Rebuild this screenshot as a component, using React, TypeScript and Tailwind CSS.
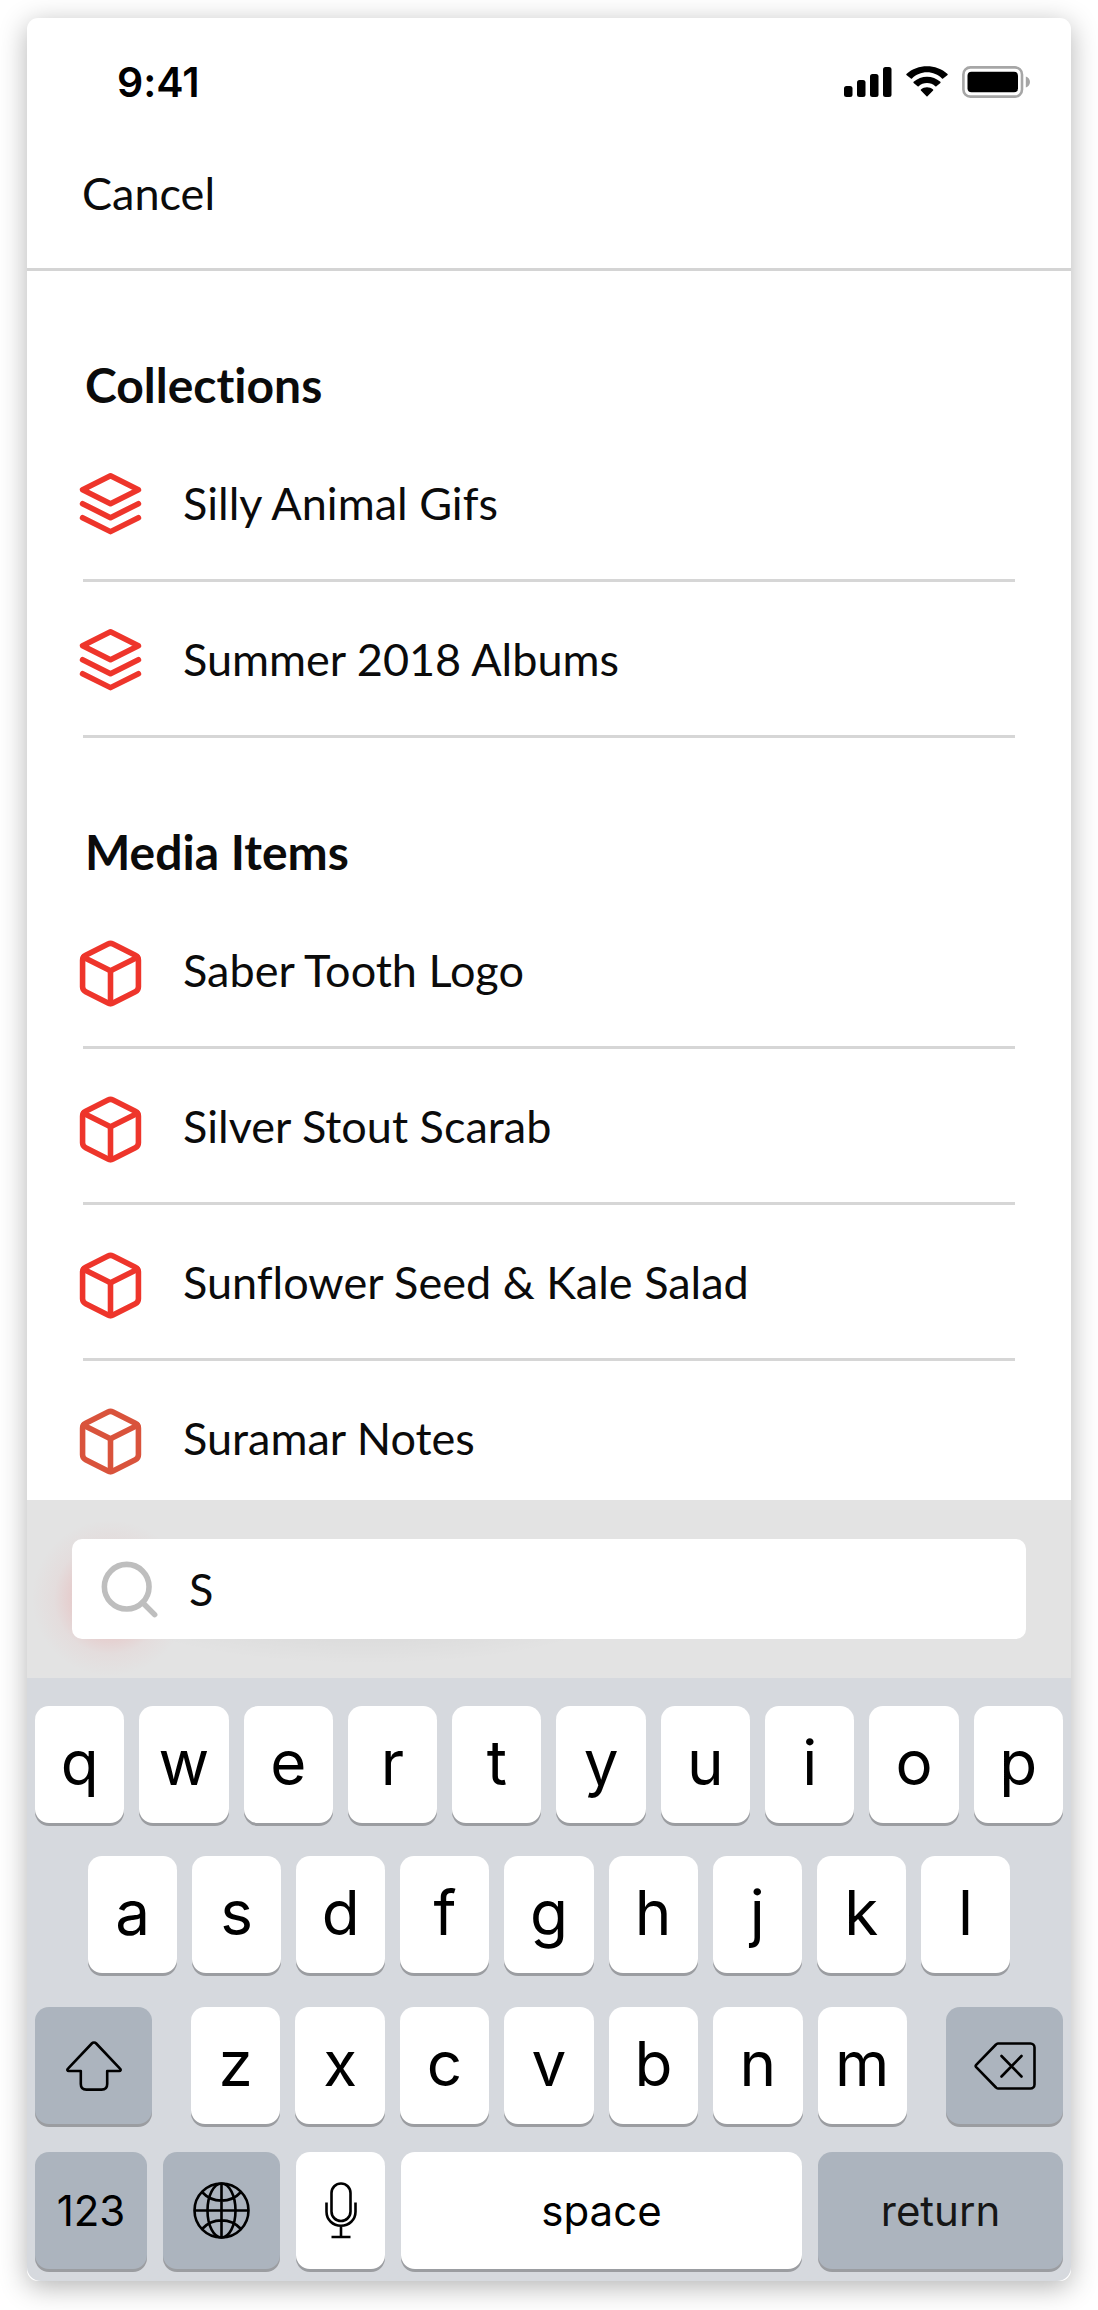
import { useState, type ReactNode } from "react";

const LayersIcon = () => (
  <svg
    viewBox="0 1 24 24"
    className="size-[67px] shrink-0 overflow-visible"
    fill="none"
    stroke="#ee352b"
    strokeWidth="2"
    strokeLinecap="round"
    strokeLinejoin="round"
    aria-hidden="true"
  >
    <path d="M12 2 2 7l10 5 10-5-10-5z" />
    <path d="m2 17 10 5 10-5" />
    <path d="m2 12 10 5 10-5" />
  </svg>
);

const BoxIcon = ({ color }: { color: string }) => (
  <svg
    viewBox="0 0 24 24"
    className="size-[67px] shrink-0"
    fill="none"
    stroke={color}
    strokeWidth="2"
    strokeLinecap="round"
    strokeLinejoin="round"
    aria-hidden="true"
  >
    <path d="M12.89 1.45l8 4A2 2 0 0 1 22 7.24v9.53a2 2 0 0 1-1.11 1.79l-8 4a2 2 0 0 1-1.79 0l-8-4a2 2 0 0 1-1.1-1.8V7.24a2 2 0 0 1 1.11-1.79l8-4a2 2 0 0 1 1.78 0z" />
    <path d="M2.32 6.16 12 11l9.68-4.84" />
    <path d="M12 22.76V11" />
  </svg>
);

const StatusBar = () => (
  <div className="flex h-[92px] items-end justify-between pr-[41px] pl-[90px]">
    <time className="font-['Inter',sans-serif] text-[41px] leading-[56px] font-semibold text-black">
      9:41
    </time>
    <div className="flex h-[56px] items-center gap-[14px]">
      <svg className="h-8 w-12" viewBox="0 0 48 32" aria-label="Signal">
        <rect x="0" y="20" width="8.5" height="11" rx="2.5" />
        <rect x="13" y="14" width="8.5" height="17" rx="2.5" />
        <rect x="26" y="8" width="8.5" height="23" rx="2.5" />
        <rect x="39" y="1" width="8.5" height="30" rx="2.5" />
      </svg>
      <svg className="h-8 w-[42px]" viewBox="0 0 42 32" aria-label="Wi-Fi">
        <path d="M21 6.3c5.8 0 11.100 2.300 15 6.100.300.300.800.300 1.100 0l4.500-3.500a1 1 0 0 0 0-.9C30.100-2.300 11.900-2.300.4 8a1 1 0 0 0 0 .9l4.500 3.500c.3.300.800.300 1.100 0C9.900 8.600 15.200 6.300 21 6.300z" />
        <path d="M21 17c3.200 0 6.100 1.200 8.300 3.200.300.300.800.300 1.100 0l4-3.300c.3-.3.300-.8 0-1.100-7.600-6.900-19.200-6.900-26.800 0-.3.300-.3.800 0 1.100l4 3.300c.3.300.8.300 1.100 0C14.900 18.200 17.800 17 21 17z" />
        <path d="M27.100 24.600c.3-.3.300-.8 0-1.100-3.500-3-8.700-3-12.200 0-.3.300-.3.800 0 1.100l5.600 5.700c.3.300.7.300 1 0z" />
      </svg>
      <svg className="h-8 w-[68px]" viewBox="0 0 68 32" aria-label="Battery">
        <rect x="1.400" y="1.400" width="58.600" height="29.200" rx="7" fill="none" stroke="#a6a6a6" strokeWidth="2.600" />
        <rect x="5.500" y="5.800" width="50.500" height="20.400" rx="4" />
        <path d="M63.800 10.500v11c2.400-.8 4.200-3 4.200-5.500s-1.800-4.700-4.200-5.500z" fill="#a6a6a6" />
      </svg>
    </div>
  </div>
);

function Section({ title, children }: { title: string; children: ReactNode }) {
  return (
    <section className="pt-[86px]">
      <h2 className="mb-[13px] pl-[2px] text-[48px] leading-[56px] font-bold">{title}</h2>
      <ul>{children}</ul>
    </section>
  );
}

function Row({ icon, label, divided = true }: { icon: ReactNode; label: string; divided?: boolean }) {
  return (
    <li>
      <a href="#" className="-ml-[6px] flex h-[153px] items-center gap-[39px] pt-2 text-[45px] leading-[56px]">
        {icon}
        <span className="pb-2">{label}</span>
      </a>
      {divided && <div className="h-[3px] bg-[#d6d6d6]" />}
    </li>
  );
}

function Key({
  children,
  label,
  className = "flex-1",
  tone = "light",
}: {
  children: ReactNode;
  label?: string;
  className?: string;
  tone?: "light" | "dark";
}) {
  return (
    <button
      type="button"
      aria-label={label}
      className={`flex h-[117px] min-w-0 items-center justify-center rounded-[14px] shadow-[0_3px_0_#9b9da1] ${
        tone === "light" ? "bg-white" : "bg-[#acb4be]"
      } ${className}`}
    >
      {children}
    </button>
  );
}

const Letters = ({ keys }: { keys: string }) => (
  <>
    {keys.split("").map((k) => (
      <Key key={k}>
        <span className="pb-1 text-[62px] leading-[72px]">{k}</span>
      </Key>
    ))}
  </>
);

function Keyboard() {
  return (
    <div className="rounded-b-[14px] bg-[#d6d9de] px-2 pt-7 pb-3 font-['Inter',sans-serif] text-black">
      <div className="flex gap-[15px]">
        <Letters keys="qwertyuiop" />
      </div>
      <div className="mt-[33px] flex gap-[15px] px-[53px]">
        <Letters keys="asdfghjkl" />
      </div>
      <div className="mt-[34px] flex gap-[39px]">
        <Key label="Shift" tone="dark" className="w-[117px]">
          <svg className="h-[50px] w-[56px]" viewBox="0 0 56 50" fill="none" stroke="#000" strokeWidth="2.600" strokeLinejoin="round">
            <path d="M25.800 2.500a3 3 0 0 1 4.400 0L54 27.600c1.200 1.200.6 2.400-.8 2.400H41.200v13c0 3.600-2 5.600-5.600 5.600H20.400c-3.600 0-5.600-2-5.600-5.600V30H2.800c-1.400 0-2-1.200-.8-2.400z" />
          </svg>
        </Key>
        <div className="flex flex-1 gap-[15px]">
          <Letters keys="zxcvbnm" />
        </div>
        <Key label="Delete" tone="dark" className="w-[117px]">
          <svg className="h-[48px] w-[62px]" viewBox="0 0 62 48" fill="none" stroke="#000" strokeWidth="2.600" strokeLinejoin="round" strokeLinecap="round">
            <path d="M24 1.500h32.500a4 4 0 0 1 4 4v37a4 4 0 0 1-4 4H24a3 3 0 0 1-2-1L2.200 25.200a1.800 1.800 0 0 1 0-2.400L22 2.500a3 3 0 0 1 2-1z" />
            <path d="m27.500 14 20 20.500M47.500 14l-20 20.500" />
          </svg>
        </Key>
      </div>
      <div className="mt-7 flex gap-4 text-[42px] leading-[56px]">
        <Key tone="dark" className="w-[112px]">123</Key>
        <Key label="Next keyboard" tone="dark" className="w-[117px]">
          <svg className="size-[57px]" viewBox="0 0 57 57" fill="none" stroke="#000" strokeWidth="2.600">
            <circle cx="28.500" cy="28.500" r="27" />
            <ellipse cx="28.500" cy="28.500" rx="14" ry="27" />
            <path d="M28.500 1.500v54M1.500 28.500h54M9 10c10.500 11.500 28.500 11.500 39 0M9 47c10.500-11.500 28.500-11.500 39 0" />
          </svg>
        </Key>
        <Key label="Dictate" className="w-[89px]">
          <svg className="h-[57px] w-[32px]" viewBox="0 0 32 57" fill="none" stroke="#000" strokeWidth="2.600">
            <rect x="6.500" y="1.500" width="19" height="37.500" rx="9.500" />
            <path d="M1.500 20.500v9.200c0 8 6.400 14 14.500 14s14.500-6 14.500-14v-9.200M16 43.700V55M6.500 55h19" />
          </svg>
        </Key>
        <Key className="flex-1">space</Key>
        <Key tone="dark" className="w-[245px] text-[#161616]">return</Key>
      </div>
    </div>
  );
}

export default function App() {
  const [query, setQuery] = useState("S");

  return (
    <div className="bg-white px-[27px] pt-[18px] pb-[30px] font-['Lato',sans-serif] text-[#0b0b0b] [font-variant-ligatures:none]">
      <div className="rounded-[11px] bg-white shadow-[0_6px_28px_rgba(0,0,0,0.3)]">
        <header className="border-b-[3px] border-[#d4d4d4] pb-[47px]">
          <StatusBar />
          <button type="button" className="mt-[55px] ml-[55px] block text-[45px] leading-[56px]">
            Cancel
          </button>
        </header>

        <main className="px-[56px]">
          <Section title="Collections">
            <Row icon={<LayersIcon />} label="Silly Animal Gifs" />
            <Row icon={<LayersIcon />} label="Summer 2018 Albums" />
          </Section>
          <Section title="Media Items">
            <Row icon={<BoxIcon color="#ee352b" />} label="Saber Tooth Logo" />
            <Row icon={<BoxIcon color="#ee352b" />} label="Silver Stout Scarab" />
            <Row icon={<BoxIcon color="#ee352b" />} label="Sunflower Seed & Kale Salad" />
            <Row icon={<BoxIcon color="#d9533c" />} label="Suramar Notes" divided={false} />
          </Section>
        </main>

        <div className="relative -mt-[14px] bg-[#e3e3e3] bg-[radial-gradient(circle_at_83px_98px,rgba(238,120,120,0.4),rgba(238,120,120,0.19)_40px,rgba(238,120,120,0.06)_56px,rgba(238,120,120,0)_78px),radial-gradient(ellipse_260px_60px_at_340px_104px,rgba(0,0,0,0.07),rgba(0,0,0,0))] px-[45px] py-[39px]">
          <div className="flex h-[100px] items-center gap-[26px] rounded-[10px] bg-white pl-6">
            <svg
              viewBox="0 0 24 24"
              className="size-[67px] shrink-0"
              fill="none"
              stroke="#bebebe"
              strokeWidth="2"
              strokeLinecap="round"
              aria-hidden="true"
            >
              <circle cx="11" cy="11" r="8" />
              <path d="m21 21-4.350-4.350" />
            </svg>
            <input
              type="text"
              aria-label="Search"
              value={query}
              onChange={(e) => setQuery(e.target.value)}
              className="min-w-0 flex-1 bg-transparent text-[45px] leading-[56px] outline-none"
            />
          </div>
        </div>

        <Keyboard />
      </div>
    </div>
  );
}
